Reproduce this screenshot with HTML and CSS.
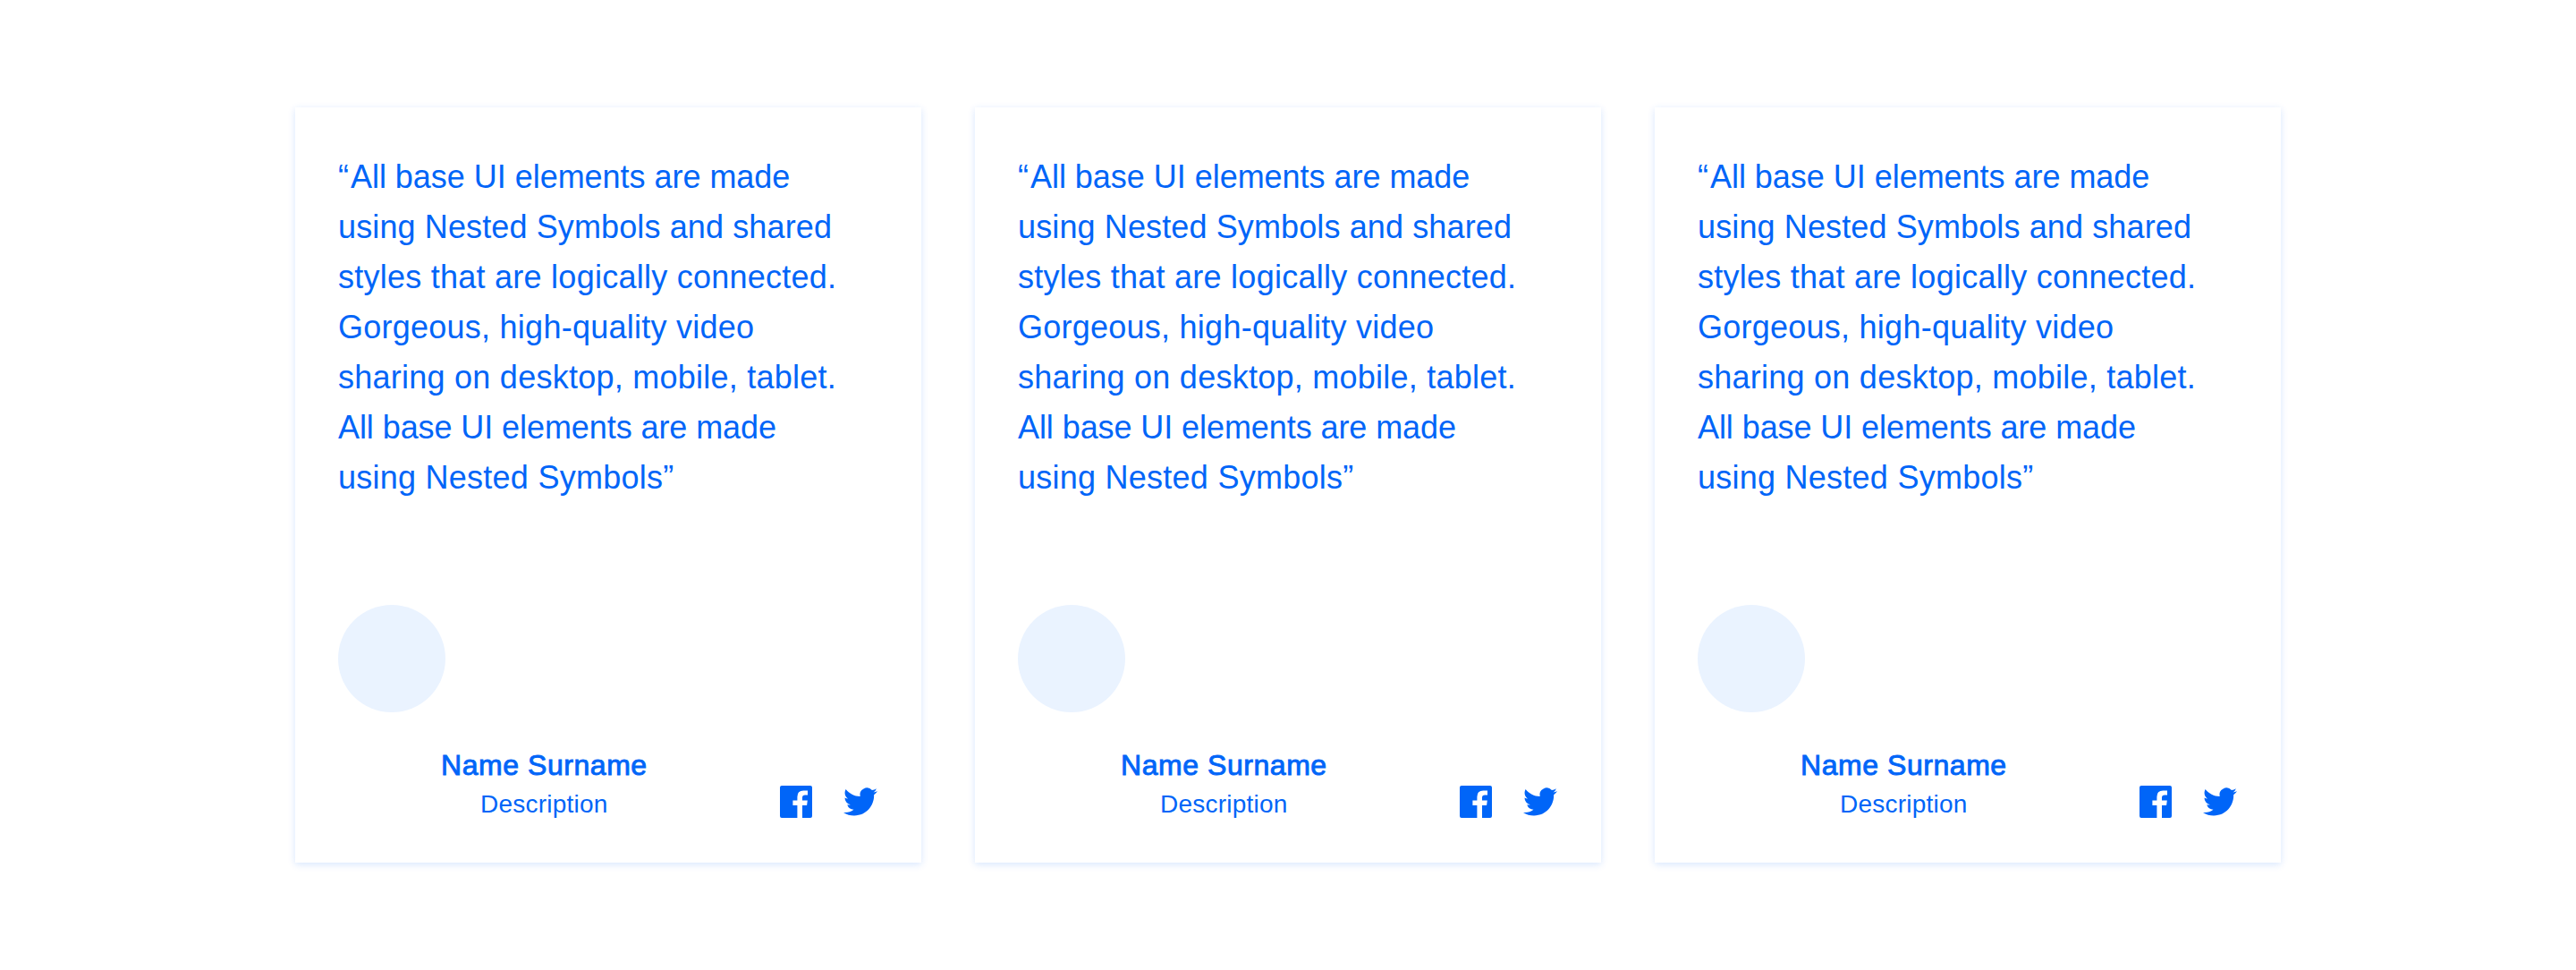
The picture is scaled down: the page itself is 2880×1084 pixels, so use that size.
FILE: index.html
```html
<!DOCTYPE html>
<html lang="en">
<head>
<meta charset="utf-8">
<title>Testimonials</title>
<link rel="stylesheet" href="styles.css">
</head>
<body>
<svg class="sprite" aria-hidden="true">
  <symbol id="facebook" viewBox="0 0 36 36"><path d="M34 0H2Q0 0 0 2V34Q0 36 2 36H19.4V22H14.4V16.4H19.4V12.4Q19.4 5.5 26.3 5.5H31V10.6H28Q25 10.6 25 13.4V16.4H30.8L30.1 22H25V36H34Q36 36 36 34V2Q36 0 34 0Z"/></symbol>
  <symbol id="twitter" viewBox="0 0 24 24"><path d="M23.953 4.57a10 10 0 01-2.825.775 4.958 4.958 0 002.163-2.723c-.951.555-2.005.959-3.127 1.184a4.92 4.92 0 00-8.384 4.482C7.69 8.095 4.067 6.13 1.64 3.162a4.822 4.822 0 00-.666 2.475c0 1.71.87 3.213 2.188 4.096a4.904 4.904 0 01-2.228-.616v.06a4.923 4.923 0 003.946 4.827 4.996 4.996 0 01-2.212.085 4.936 4.936 0 004.604 3.417 9.867 9.867 0 01-6.102 2.105c-.39 0-.779-.023-1.17-.067a13.995 13.995 0 007.557 2.209c9.053 0 13.998-7.496 13.998-13.985 0-.21 0-.42-.015-.63A9.935 9.935 0 0024 4.59z"/></symbol>
</svg>
<main class="testimonials">
  <article class="card">
    <p class="quote"><span class="line close"><span class="mark">“</span>All base UI elements are made</span><span class="line snug">using Nested Symbols and shared</span><span class="line">styles that are logically connected.</span><span class="line">Gorgeous, high-quality video</span><span class="line">sharing on desktop, mobile, tablet.</span><span class="line tight">All base UI elements are made</span><span class="line">using Nested Symbols”</span></p>
    <div class="avatar"></div>
    <footer class="footer">
      <div class="author"><div class="name">Name Surname</div><div class="description">Description</div></div>
      <div class="social"><svg class="facebook"><use href="#facebook"/></svg><svg class="twitter"><use href="#twitter"/></svg></div>
    </footer>
  </article>
  <article class="card">
    <p class="quote"><span class="line close"><span class="mark">“</span>All base UI elements are made</span><span class="line snug">using Nested Symbols and shared</span><span class="line">styles that are logically connected.</span><span class="line">Gorgeous, high-quality video</span><span class="line">sharing on desktop, mobile, tablet.</span><span class="line tight">All base UI elements are made</span><span class="line">using Nested Symbols”</span></p>
    <div class="avatar"></div>
    <footer class="footer">
      <div class="author"><div class="name">Name Surname</div><div class="description">Description</div></div>
      <div class="social"><svg class="facebook"><use href="#facebook"/></svg><svg class="twitter"><use href="#twitter"/></svg></div>
    </footer>
  </article>
  <article class="card">
    <p class="quote"><span class="line close"><span class="mark">“</span>All base UI elements are made</span><span class="line snug">using Nested Symbols and shared</span><span class="line">styles that are logically connected.</span><span class="line">Gorgeous, high-quality video</span><span class="line">sharing on desktop, mobile, tablet.</span><span class="line tight">All base UI elements are made</span><span class="line">using Nested Symbols”</span></p>
    <div class="avatar"></div>
    <footer class="footer">
      <div class="author"><div class="name">Name Surname</div><div class="description">Description</div></div>
      <div class="social"><svg class="facebook"><use href="#facebook"/></svg><svg class="twitter"><use href="#twitter"/></svg></div>
    </footer>
  </article>
</main>
</body>
</html>
```
FILE: styles.css
```css
* { box-sizing: border-box; }
body {
  margin: 0;
  background: #fff;
  color: #0065f8;
  font-family: "Liberation Sans", Arial, sans-serif;
}
.sprite { display: none; }
.testimonials {
  display: grid;
  grid-template-columns: repeat(3, 700px);
  justify-content: center;
  gap: 60px;
  padding: 120px 0;
}
.card {
  display: flex;
  flex-direction: column;
  height: 844px;
  padding: 50px 48px 0;
  background: #fff;
  box-shadow: 0 2px 8px rgba(0, 101, 248, .16);
}
.quote {
  margin: 0;
  height: 506px;
  font-size: 36px;
  line-height: 56px;
  white-space: nowrap;
}
.line { display: block; letter-spacing: .25px; }
.snug { letter-spacing: .12px; }
.close { letter-spacing: -.03px; }
.tight { letter-spacing: -.08px; }
.mark { margin-right: 2px; }
.avatar {
  width: 120px;
  height: 120px;
  border-radius: 50%;
  background: #eaf3ff;
}
.footer {
  display: flex;
  justify-content: space-between;
  padding: 38px 1px 0 115px;
}
.author { text-align: center; }
.name {
  font-size: 32px;
  line-height: 42px;
  letter-spacing: .55px;
  -webkit-text-stroke: .9px currentColor;
}
.description {
  font-size: 28px;
  line-height: 46px;
  letter-spacing: .22px;
}
.social {
  display: flex;
  align-items: center;
  gap: 35px;
  height: 36px;
  margin-top: 44px;
  fill: currentColor;
}
.facebook { width: 36px; height: 36px; }
.twitter { width: 38px; height: 38px; }
```
